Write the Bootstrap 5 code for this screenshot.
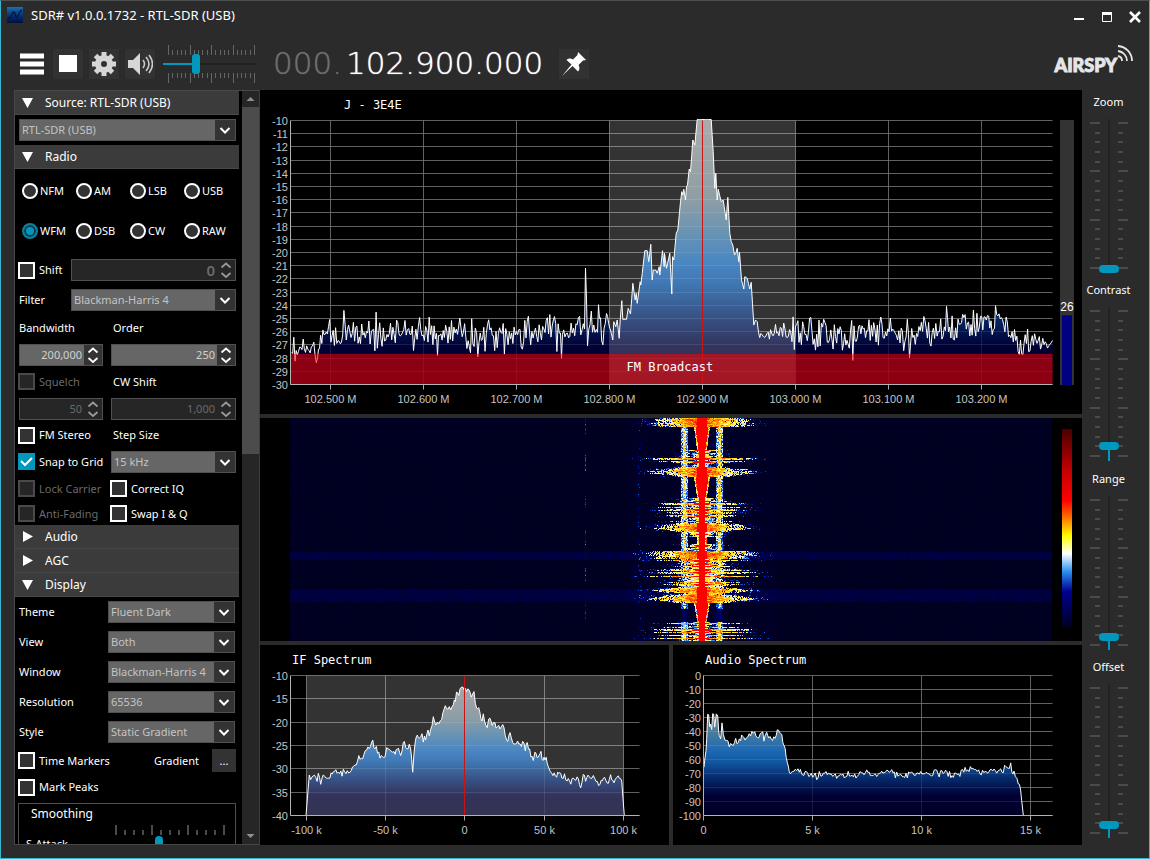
<!DOCTYPE html>
<html lang="en" data-bs-theme="dark">
<head>
<meta charset="utf-8">
<meta name="viewport" content="width=device-width, initial-scale=1">
<title>SDR# v1.0.0.1732 - RTL-SDR (USB)</title>
<link href="https://cdn.jsdelivr.net/npm/bootstrap@5.3.0/dist/css/bootstrap.min.css" rel="stylesheet">
<style>
:root{--chrome:#2b2b2b;--line:#484848;--accent:#0098bd}
body{background:var(--chrome);color:#fff;font-family:"Noto Sans","Open Sans",sans-serif;font-size:11px;line-height:16px}
.app-window{height:100vh;min-height:640px;border:1px solid #35b8cf;border-top-color:#4c4f4e}
.titlebar{height:28px;font-size:13px;padding:0 0 0 6px}
.win-btn{width:28px;height:28px;border:0;background:none;color:#fff;padding:0}
.toolbar{height:61px;padding:0 16px 0 16px}
.tool-btn{width:30px;height:30px;border:0;border-radius:0;background:#323232;padding:0;color:#fff}
.tool-btn.plain{background:none}
.freq{font-family:"DejaVu Sans",sans-serif;font-weight:200;font-size:31px;line-height:36px;text-shadow:0 0 1px currentColor}
.freq .dim{color:#6e6e6e}
.brand{font-family:Lato,sans-serif;font-weight:900;font-size:18px;line-height:24px;color:#e6e6e6;-webkit-text-stroke:1px #e6e6e6}
.main-area{padding:0 0 13px 13px}
/* sidebar */
.side{width:246px;background:#000;border:1px solid var(--line);border-right-color:#3c3c3c}
.side-scroll{overflow-y:auto;scrollbar-width:none}
.side-scroll::-webkit-scrollbar{display:none}
.side-bar{width:17px;background:#262626;color:#8a8a8a}
.side-thumb{height:347px;background:#4c4c4c}
.sec-head{width:224px;height:24px;border:0;border-bottom:1px solid var(--line);background:#3b3b3b;color:#fff;font-size:12px;padding:0 0 0 7px;gap:12px;text-align:left}
.sec-head svg{width:11px;height:11px}
.sec-body{width:224px;padding:0 3px 0 4px}
.row30{height:30px}.row27{height:27px}.row26{height:26px}.row23{height:23px}
.mode-list{padding:2px 0 4px 7px}
.mode-row{height:40px}
.mode-row label{width:54px;gap:2px}
.mode-row input{width:16px;height:16px;margin:0;appearance:none;border:2px solid #fff;border-radius:50%;background:#333}
.mode-row input:checked{border-color:#0f7e99;background:var(--accent);box-shadow:inset 0 0 0 2px #123a45}
.tick-box{gap:4px;margin-left:-1px}
.tick-box .form-check-input{width:17px;height:17px;margin:0;border:2px solid #fff;border-radius:0;background-color:#333;float:none}
.tick-box .form-check-input:checked{background-color:var(--accent);border-color:var(--accent);background-size:17px 17px;background-origin:border-box;
 background-image:url("data:image/svg+xml,%3Csvg xmlns='http://www.w3.org/2000/svg' viewBox='0 0 17 17'%3E%3Cpath d='M3 8l4 4 7-7' fill='none' stroke='%23fff' stroke-width='2'/%3E%3C/svg%3E")}
.tick-box .form-check-input:disabled{border-color:#4a4a4a;background-color:#262626;opacity:1}
.tick-box .form-check-input:disabled~span{color:#6a6a6a}
.pick{height:22px;padding:0 24px 0 2px;border:1px solid #505050;border-radius:0;font-size:11px;line-height:18px;color:#c4c4c4;background-color:#666;
 background-image:url("data:image/svg+xml,%3Csvg xmlns='http://www.w3.org/2000/svg' width='20' height='20'%3E%3Cpath d='M0 0h20v20H0z' fill='%23333'/%3E%3Cpath d='M5.500 8l4.500 4.500L14.500 8' fill='none' stroke='%23fff' stroke-width='2'/%3E%3C/svg%3E");background-size:20px 20px;background-position:right 0 center}
.col-a{width:92px}.col-b{width:125px}
.col-a+label:not(.tick-box){padding-left:2px}
.spin{height:22px;border:1px solid #505050;background:#666;color:#d0d0d0}
.spin input{min-width:0;width:100%;border:0;background:none;color:inherit;text-align:right;padding:0 2px 0 0;font-size:11px;outline:0}
.spin svg{width:18px;height:20px;flex:none;background:#333;color:#fff}
.spin.off{background:#262626;color:#6a6a6a}
.spin.off svg{background:none;color:#999}
.spin.big input{font-size:15px;font-weight:600}
.more-btn{width:24px;height:23px;border:0;border-radius:0;background:#333;color:#fff;padding:0;font-size:11px;line-height:20px}
.group{width:218px;margin:3px 0 0 3px;border:1px solid #505050;padding:2px 0 0 7px}
.group .gtitle{font-size:12px;padding:0 0 2px 5px}
/* sliders */
.slide{appearance:none;background:none;margin:0;height:20px}
.slide::-webkit-slider-runnable-track{height:2px;background:linear-gradient(to right,var(--accent) var(--v),#222 var(--v))}
.slide::-webkit-slider-thumb{appearance:none;width:8px;height:20px;margin-top:-9px;border-radius:4px;background:var(--accent);border:0}
.dials{width:67px;padding:2px 14px 0 0}
.dials label{font-size:11px;line-height:20px}
.dial{width:40px;height:154px;margin-top:7px;position:relative}
.dial .slide{position:absolute;width:154px;top:67px;left:-57px;transform:rotate(-90deg)}
.dial svg{width:40px;height:154px;display:block}
.vol{width:94px;height:40px;position:relative}
.vol .slide{position:absolute;left:0;top:9px;width:94px}
.vol .slide::-webkit-slider-thumb{border-radius:3px}
.ticks{stroke:#4b4b4b;stroke-width:2}
.ticks.fine{stroke:#666;stroke-width:1}
/* plots */
.plots{display:grid;gap:4px;grid-template-columns:409fr 409fr;grid-template-rows:324fr 223fr 200fr;min-width:0}
.plot{background:#000;min-width:0;min-height:0;overflow:hidden;position:relative}
.plot.span2{grid-column:1/3}
.plot>svg{position:absolute;inset:0;width:100%;height:100%}
.axis{font:11px "Liberation Sans",Arial,sans-serif;fill:#c4c4c4}
.cap{font:12px "DejaVu Sans Mono",monospace;fill:#fff}
.fall{display:grid;grid-template-columns:30px 1fr 30px}
.fall canvas{width:100%;height:100%;display:block;min-height:0;image-rendering:pixelated}
.fall-scale{width:10px;margin:11px 10px 14px 10px;background:linear-gradient(#4a0000,#c80000 22%,#f00 36%,#f60 44%,#ff0 54%,#fff 63%,#2a90f0 72%,#000090 82%,#000020)}
</style>
</head>
<body>
<div class="app-window d-flex flex-column overflow-hidden">
  <header class="titlebar d-flex align-items-center flex-shrink-0">
    <svg width="16" height="16" viewBox="0 0 16 16" class="me-2"><defs><linearGradient id="lg" x1="0" y1="0" x2="0" y2="1"><stop offset="0" stop-color="#1274b4"/><stop offset=".6" stop-color="#062a70"/><stop offset="1" stop-color="#02103c"/></linearGradient></defs><path d="M0 0h16v16H0z" fill="url(#lg)"/><path d="M1 11C5 13 5 4 7 5s1 7 3 5 2-6 5-7" fill="none" stroke="#04183c" stroke-width="1.500"/></svg>
    <span class="flex-grow-1">SDR# v1.0.0.1732 - RTL-SDR (USB)</span>
    <button class="win-btn" aria-label="Minimize"><svg width="12" height="12"><path d="M1 8h10" stroke="#fff" stroke-width="2"/></svg></button>
    <button class="win-btn" aria-label="Maximize"><svg width="12" height="12"><path d="M1.500 2v8.500h9V2" fill="none" stroke="#fff"/><path d="M1 2.500h10" stroke="#fff" stroke-width="3"/></svg></button>
    <button class="win-btn" aria-label="Close"><svg width="12" height="12"><path d="M1 1l10 10M11 1L1 11" stroke="#fff" stroke-width="2.600"/></svg></button>
  </header>

  <div class="toolbar d-flex align-items-start flex-shrink-0">
    <div class="d-flex pt-1 mt-3 flex-shrink-0" style="gap:6px">
      <button class="tool-btn plain" aria-label="Menu"><svg width="24" height="22" viewBox="0 0 24 22"><path d="M0 3h24M0 11h24M0 19h24" stroke="#fff" stroke-width="5"/></svg></button>
      <button class="tool-btn" aria-label="Stop"><svg width="18" height="18"><path d="M0 0h18v17H0z" fill="#fff"/></svg></button>
      <button class="tool-btn" aria-label="Settings"><svg width="24" height="24" viewBox="-12 -12 24 24" fill="#d6d6d6"><g id="gear"></g><path fill-rule="evenodd" d="M-9 0a9 9 0 1 0 18 0a9 9 0 1 0-18 0M-3 0a3 3 0 1 0 6 0a3 3 0 1 0-6 0"/></svg></button>
      <button class="tool-btn" aria-label="Mute"><svg width="26" height="24" viewBox="0 0 26 24"><path d="M1 8h5l7-7v22l-7-7H1z" fill="#d6d6d6"/><path d="M16 8q3 4 0 8M19 5q6 7 0 14M22 3q7 9 0 18" fill="none" stroke="#c8c8c8" stroke-width="1.600"/></svg></button>
    </div>
    <div class="vol ms-2 mt-3"><svg width="94" height="40" class="position-absolute top-0" id="volTicks"></svg><input class="slide" type="range" aria-label="Volume" value="34" style="--v:34%"></div>
    <div class="freq ms-3 mt-3 d-flex" aria-label="Frequency"><span class="dim me-1">000.</span><span>102.900.000</span></div>
    <div class="pt-1 mt-3 ms-3"><button class="tool-btn" aria-label="Pin"><svg width="26" height="26" viewBox="0 0 26 26"><path d="M17 1l8 8-3 .500-4.500 4.500c1.500 2.500 1 5-.500 6.500L11.500 15 1 25l9.500-11.500L5.500 9c1.500-1.500 4-2 6.500-.500L16.500 4z" fill="#fff"/></svg></button></div>
    <div class="brand ms-auto mt-3 d-flex align-items-start"><span class="pt-2">AIRSPY</span><svg width="16" height="18" viewBox="0 0 16 18" stroke="#e6e6e6" fill="none" stroke-width="1.800"><path d="M1 1a15 15 0 0 1 14 15M1 6a10 10 0 0 1 9 10M1 11a5 5 0 0 1 4 5"/></svg></div>
  </div>

  <main class="main-area d-flex flex-grow-1 overflow-hidden">
    <aside class="side d-flex justify-content-between flex-shrink-0">
      <div class="side-scroll">
        <button class="sec-head d-flex align-items-center" data-open="1">Source: RTL-SDR (USB)</button>
        <div class="sec-body d-flex align-items-center row30"><select class="form-select pick" aria-label="Source"><option>RTL-SDR (USB)</option></select></div>
        <button class="sec-head d-flex align-items-center" data-open="1">Radio</button>
        <div class="mode-list" id="modes"></div>
        <div class="sec-body">
          <div class="row30 d-flex align-items-center"><label class="tick-box d-flex align-items-center flex-shrink-0" style="width:53px"><input type="checkbox" class="form-check-input"><span>Shift</span></label><div class="spin big off d-flex flex-grow-1"><input type="text" value="0" aria-label="Shift" disabled></div></div>
          <div class="row30 d-flex align-items-center"><label for="filter" style="width:52px">Filter</label><select id="filter" class="form-select pick flex-grow-1 w-auto"><option>Blackman-Harris 4</option></select></div>
          <div class="row26 d-flex align-items-center"><label for="bw" class="col-a">Bandwidth</label><label for="ord">Order</label></div>
          <div class="row27 d-flex align-items-center"><div class="spin d-flex me-2" style="width:84px"><input id="bw" value="200,000"></div><div class="spin d-flex col-b"><input id="ord" value="250"></div></div>
          <div class="row27 d-flex align-items-center"><div class="col-a"><label class="tick-box d-flex align-items-center"><input type="checkbox" class="form-check-input" disabled><span>Squelch</span></label></div><label for="cw">CW Shift</label></div>
          <div class="row27 d-flex align-items-center"><div class="spin off d-flex me-2" style="width:84px"><input value="50" aria-label="Squelch level" disabled></div><div class="spin off d-flex col-b"><input id="cw" value="1,000" disabled></div></div>
          <div class="row26 d-flex align-items-center"><div class="col-a"><label class="tick-box d-flex align-items-center"><input type="checkbox" class="form-check-input"><span>FM Stereo</span></label></div><label for="step">Step Size</label></div>
          <div class="row27 d-flex align-items-center"><div class="col-a"><label class="tick-box d-flex align-items-center text-nowrap"><input type="checkbox" class="form-check-input" checked><span>Snap to Grid</span></label></div><select id="step" class="form-select pick col-b"><option>15 kHz</option></select></div>
          <div class="row27 d-flex align-items-center"><div class="col-a"><label class="tick-box d-flex align-items-center text-nowrap"><input type="checkbox" class="form-check-input" disabled><span>Lock Carrier</span></label></div><label class="tick-box d-flex align-items-center"><input type="checkbox" class="form-check-input"><span>Correct IQ</span></label></div>
          <div class="row23 d-flex align-items-center"><div class="col-a"><label class="tick-box d-flex align-items-center text-nowrap"><input type="checkbox" class="form-check-input" disabled><span>Anti-Fading</span></label></div><label class="tick-box d-flex align-items-center"><input type="checkbox" class="form-check-input"><span>Swap I &amp; Q</span></label></div>
        </div>
        <button class="sec-head d-flex align-items-center">Audio</button>
        <button class="sec-head d-flex align-items-center">AGC</button>
        <button class="sec-head d-flex align-items-center" data-open="1">Display</button>
        <div class="sec-body" id="display"></div>
        <div class="sec-body">
          <div class="d-flex align-items-center justify-content-between row27"><label class="tick-box d-flex align-items-center"><input type="checkbox" class="form-check-input"><span>Time Markers</span></label><div class="d-flex align-items-center" style="gap:13px"><span>Gradient</span><button class="more-btn" aria-label="Edit gradient">...</button></div></div>
          <div class="row26 d-flex align-items-center"><label class="tick-box d-flex align-items-center"><input type="checkbox" class="form-check-input"><span>Mark Peaks</span></label></div>
        </div>
        <div class="group"><div class="gtitle">Smoothing</div>
          <div class="d-flex justify-content-between"><label for="satt" class="pt-2 mt-1">S-Attack</label><div><svg width="124" height="12" class="d-block" id="attTicks"></svg><input id="satt" class="slide d-block" type="range" value="38" style="--v:38%;width:124px"></div></div>
        </div>
      </div>
      <div class="side-bar d-flex flex-column">
        <svg width="17" height="16" class="flex-shrink-0"><path d="M4.500 10h8l-4-4z" fill="#909090"/></svg>
        <div class="side-thumb"></div>
        <svg width="17" height="16" class="mt-auto flex-shrink-0"><path d="M4.500 6h8l-4 4z" fill="#909090"/></svg>
      </div>
    </aside>

    <section class="plots flex-grow-1">
      <div class="plot span2" id="rf"></div>
      <div class="plot span2 fall"><span></span><canvas id="fall" width="762" height="223"></canvas><div class="fall-scale"></div></div>
      <div class="plot" id="ifs"></div>
      <div class="plot" id="aud"></div>
    </section>

    <aside class="dials d-flex flex-column flex-shrink-0" id="dials"></aside>
  </main>
</div>
<script src="https://cdn.jsdelivr.net/npm/bootstrap@5.3.0/dist/js/bootstrap.bundle.min.js"></script>
<script>
const $=s=>document.querySelector(s), $$=s=>[...document.querySelectorAll(s)];
function rng(seed){return()=>{seed=(seed*1664525+1013904223)>>>0;return seed/4294967296}}

/* sidebar pieces */
$('#gear').innerHTML=[...Array(8)].map((_,i)=>`<path d="M-2.500 -12h5v6h-5z" transform="rotate(${i*45})"/>`).join('');
$$('.sec-head').forEach(h=>h.insertAdjacentHTML('afterbegin',h.dataset.open?'<svg viewBox="0 0 11 11"><path d="M0 1h11L5.500 11z" fill="#fff"/></svg>':'<svg viewBox="0 0 11 11"><path d="M1 0v11l10-5.500z" fill="#fff"/></svg>'));
$('#modes').innerHTML=[['NFM','AM','LSB','USB'],['WFM','DSB','CW','RAW']].map(r=>'<div class="mode-row d-flex align-items-center">'+r.map(m=>`<label class="d-flex align-items-center"><input type="radio" name="mode"${m=='WFM'?' checked':''}>${m}</label>`).join('')+'</div>').join('');
$$('.spin').forEach(s=>s.insertAdjacentHTML('beforeend','<svg viewBox="0 0 18 20"><path d="M4.500 7.500L9 3.500l4.500 4M4.500 13L9 17l4.500-4" fill="none" stroke="currentColor" stroke-width="1.700"/></svg>'));
$('#display').innerHTML=[['Theme','Fluent Dark'],['View','Both'],['Window','Blackman-Harris 4'],['Resolution','65536'],['Style','Static Gradient']].map(([l,v])=>`<div class="row30 d-flex align-items-center"><label for="d${l}" style="width:89px">${l}</label><select id="d${l}" class="form-select pick" style="width:127px"><option>${v}</option></select></div>`).join('');

/* slider scales */
$('#dials').innerHTML=[['Zoom',0],['Contrast',7.5],['Range',6.5],['Offset',6.5]].map(([n,v])=>{
  let t='';for(let i=0;i<16;i++){const y=Math.round(4+i*145/15),l=i%5?5:10;t+=`M${11-l} ${y}h${l}M29 ${y}h${l}`}
  return `<div class="flex-fill d-flex flex-column align-items-center" style="flex-basis:0"><label for="s${n}">${n}</label><div class="dial"><svg><path class="ticks" d="${t}"/></svg><input class="slide" id="s${n}" type="range" step="any" value="${v}" style="--v:${v+2}%"></div></div>`}).join('');
{let t='';for(let i=0;i<21;i++){const x=Math.round(5+i*4.3)+.5,l=i%5?5:10;t+=`M${x} ${10-l}v${l}M${x} 28v${l}`}
$('#volTicks').innerHTML=`<path class="ticks fine" d="${t}"/>`;
t='';for(let i=0;i<13;i++){const x=5+i*9,l=i%4?5:10;t+=`M${x} ${11-l}v${l}`}
$('#attTicks').innerHTML=`<path class="ticks" d="${t}"/>`}

/* traces: control points in plot units, with seeded grain added between them */
function trace(pts,step,amp,seed){
  const r=rng(seed),o=[];
  for(let i=0;i<pts.length-1;i++){
    const [x0,y0,a=amp]=pts[i],[x1,y1]=pts[i+1],n=Math.max(1,Math.round((x1-x0)/step));
    for(let k=0;k<n;k++){const t=k/n;o.push([x0+(x1-x0)*t,y0+(y1-y0)*t+(r()+r()+r()-1.500)*a])}
  }
  o.push(pts.at(-1));return o;
}
const pair=(s,ox,oy,a)=>s.split(' ').map(p=>{const [x,y]=p.split(',').map(Number);return[x/3+ox,y/3+oy,a]});
const N=18;
const rfPts=[[1,229,12],[22,228,10],[27,238,2],[29,218,N],[38,211,N],[70,215,N],[100,211,N],[146,214,2],[147,234,2],[148,214,N],[180,215,N],[220,215,N],[270,212,2],[271,238,2],[272,212,N],[294,208,1],[295,148,1],[297,209,N],[307,211,1],[308,184,1],[310,211,N],[316,190,3]]
 .concat(pair('58,715 60,720 67,750 70,695 76,710 80,690 86,745 89,690 94,632 97,688 108,688 113,655 120,672 127,580 134,630 137,610 140,640 149,575 151,585 163,482 170,482 175,515 181,463 185,570 188,540 196,540 200,550 206,530 208,555 216,482 221,530 222,490 228,535 238,490 244,612 246,500 250,510 257,430 262,420 270,335 274,305 277,315 280,298 285,330 288,290 291,285 296,237 300,245 307,150 313,165 320,88 362,88 368,185 373,295 376,250 380,330 383,298 392,335 398,330 407,390 412,322 418,430 422,455 427,465 432,495 436,490 440,475 445,515 447,487 453,570 460,597 463,560 470,565 478,597 482,577 490,705 495,690 500,695',300,-30.5,0))
 .concat([[468,213,7],[485,213,14],[505,214,N],[525,208,N],[545,217,N],[560,221,N],[575,210,N],[595,212,N],[618,215,2],[619,238,2],[620,213,N],[655,210,2],[656,186,3],[658,208,N],[690,206,N],[704,202,6],[705,188,6],[712,206,N],[724,212,12],[730,226,14],[750,218,14],[757,228,4],[762,220,0]]);
const ifPts=pair('138,555 148,430 152,440 175,435 182,460 190,430 195,442 210,440 220,422 250,425 270,418 285,405 300,380 320,360 335,335 345,345 360,370 375,375 380,350 395,360 402,372 412,348 422,368 430,335 440,362 452,345 458,408 466,335 472,308 478,320 482,325 486,308 490,330 500,310 512,300 520,265 528,288 545,262 556,225 564,238 580,225 586,198 600,180 606,160 612,178 628,175 634,200 642,188 650,235 656,230 666,268 670,250 677,288 686,268 700,280 705,272 708,295 720,290 732,288 740,325 750,300 758,335 780,345 792,330 796,362 802,342 820,385 825,365 835,380 840,358 846,388 852,378 862,395 875,435 890,442 896,425 902,440 925,445 955,445 962,475 970,430 980,445 1000,440 1020,455 1030,442 1045,455 1055,432 1062,455 1075,435 1085,450 1093,555',-30.5,-44.5,4);
const auPts=pair('102,415 104,385 108,370 110,330 113,255 116,252 119,285 122,280 125,292 128,255 131,255 134,290 139,250 143,255 146,310 148,330 152,330 156,285 160,320 165,330 178,345 190,345 197,325 205,338 215,320 225,332 250,308 262,325 275,308 285,328 290,315 300,325 315,325 322,302 332,308 342,345 352,400 358,430 368,420 388,418 398,435 420,435 440,440 460,430 500,432 550,438 590,428 620,435 665,422 680,432 740,430 800,428 850,435 905,415 930,430 960,425 1000,420 1022,412 1032,430 1045,455 1055,510 1060,555',-33.5,-45.5,4);
ifPts[0][2]=ifPts[ifPts.length-2][2]=0;

const charts=[
 {el:'#rf',w:762,h:264,top:30,pts:trace(rfPts,1.2,0,7),y:[...Array(21)].map((_,i)=>-10-i),
  x:[...Array(8)].map((_,i)=>[40+93*i,(102.5+i/10).toFixed(3)+' M']),shade:[319,505],cur:412,title:'J - 3E4E',tx:84,ty:19,band:1,meter:1},
 {el:'#ifs',w:349,h:140,top:30,pts:trace(ifPts,1.3,3,3),y:[-10,-15,-20,-25,-30,-35,-40],
  x:[[16,'-100 k'],[95,'-50 k'],[174,'0'],[254,'50 k'],[333,'100 k']],shade:[16,333],cur:174,title:'IF Spectrum',tx:32,ty:19},
 {el:'#aud',w:349,h:140,top:30,pts:trace(auPts,1.3,2.5,5),y:[0,-10,-20,-30,-40,-50,-60,-70,-80,-90,-100],
  x:[[0,'0'],[109,'5 k'],[218,'10 k'],[327,'15 k']],title:'Audio Spectrum',tx:32,ty:19}];

function draw(c){
  const el=$(c.el),W=el.clientWidth,H=el.clientHeight,L=30.5,T=c.top+.5,pw=W-60,ph=H-60,sx=pw/c.w,sy=ph/c.h;
  const X=v=>Math.round(v*sx)+L, id='g'+c.el.slice(1);
  let s=`<svg><defs><linearGradient id="${id}" gradientUnits="userSpaceOnUse" x1="0" x2="0" y1="${T}" y2="${T+ph}"><stop offset="0" stop-color="#969696"/><stop offset=".3" stop-color="#72868f"/><stop offset=".42" stop-color="#457aa0"/><stop offset=".54" stop-color="#1c68b4"/><stop offset=".62" stop-color="#1056a0"/><stop offset=".74" stop-color="#062868"/><stop offset=".86" stop-color="#000033"/><stop offset="1" stop-color="#000026"/></linearGradient></defs>`;
  let grid='';
  c.y.forEach((v,i)=>{const y=Math.round(i*ph/(c.y.length-1))+T;grid+=`M${L} ${y}h${pw}`;s+=`<text class="axis" text-anchor="end" x="28" y="${y+4}">${v}</text>`});
  c.x.forEach(([v,t])=>{grid+=`M${X(v)} ${T}v${ph}`;s+=`<path d="M${X(v)} ${T+ph}v5" stroke="#aaa"/><text class="axis" text-anchor="middle" x="${X(v)}" y="${T+ph+18}">${t}</text>`});
  s+=`<path d="${grid}" stroke="#505050" fill="none"/>`;
  const p=c.pts.map(([x,y])=>`${(x*sx+L).toFixed(1)},${(Math.max(-1,Math.min(c.h,y))*sy+T).toFixed(1)}`);
  const a=(c.pts[0][0]*sx+L).toFixed(1),b=(c.pts.at(-1)[0]*sx+L).toFixed(1);
  s+=`<polygon points="${a},${T+ph} ${p.join(' ')} ${b},${T+ph}" fill="url(#${id})"/><path d="${grid}" stroke="#fff" opacity=".1" fill="none"/><polyline points="${p.join(' ')}" fill="none" stroke="#fff" stroke-linejoin="round"/>`;
  if(c.shade)s+=`<rect x="${X(c.shade[0])}" y="${T}" width="${X(c.shade[1])-X(c.shade[0])}" height="${ph}" fill="#fff" fill-opacity=".2"/>`;
  if(c.band)s+=`<rect x="${L}" y="${T+ph*.884}" width="${pw}" height="${ph*.116}" fill="#f00" fill-opacity=".55"/>`;
  if(c.cur)s+=`<path d="M${X(c.cur)} ${T}v${ph}" stroke="#c81414"/>`;
  s+=`<path d="M${L} ${T}v${ph}h${pw}" fill="none" stroke="#b4b4b4"/><text class="cap" x="${c.tx}" y="${c.ty}">${c.title}</text>`;
  if(c.band)s+=`<text class="cap" x="${X(c.cur)-76}" y="${T+ph-14}">FM Broadcast</text>`;
  if(c.meter)s+=`<rect x="${W-22}" y="30" width="14" height="${ph+1}" fill="#333"/><rect x="${W-20}" y="${30+ph*.74}" width="10" height="${ph*.26+1}" fill="#000080"/><text class="axis" style="font-size:12px;fill:#fff" text-anchor="middle" x="${W-15}" y="${26+ph*.74}">26</text>`;
  el.innerHTML=s+'</svg>';
}
const drawAll=()=>charts.forEach(draw);
drawAll();addEventListener('resize',drawAll);

/* waterfall */
(function(){
  const cv=$('#fall'),g=cv.getContext('2d'),im=g.createImageData(762,223),r=rng(42);
  const map=[[0,0,0,28],[.2,0,0,130],[.35,30,120,235],[.45,255,255,255],[.56,255,250,60],[.72,255,170,0],[.86,255,70,0],[1,255,0,0]];
  const col=v=>{v=Math.max(0,Math.min(1,v));let i=1;while(map[i][0]<v)i++;const a=map[i-1],b=map[i],t=(v-a[0])/(b[0]-a[0]);return[1,2,3].map(k=>a[k]+(b[k]-a[k])*t)};
  /* rows from, to, kind (b burst, l lines, q quiet), half width */
  const seg=[[0,8,'b',56],[9,31,'q'],[32,36,'l',25],[37,48,'l',56],[49,58,'b',54],[59,79,'q'],[80,84,'l',25],[85,104,'l',54],[105,113,'b',52],[114,118,'l',22],[119,125,'q'],[126,132,'l',25],[133,140,'b',56],[141,152,'l',46],[153,168,'l',54],[169,175,'b',50],[176,184,'b',56],[185,203,'q'],[204,222,'l',56]];
  for(let y=0;y<223;y++){
    const s=seg.find(q=>y<=q[1]),t=(y-s[0])/(s[1]-s[0]||1);
    let w=0,core=4,str=1,thin=false;
    if(s[2]=='q'){core=s[1]-s[0]>10?6.5-3*t:3.5}
    else if(s[2]=='b'){w=s[3]*(.5+.5*Math.sin(Math.PI*t))*(.85+r()*.2);core=5;if(s[0]==133||s[0]==0)w=s[3]*(.75+r()*.25)}
    else{const dense=s[0]>=141&&s[0]<=168;thin=y%3==0||r()<.25;w=thin?(dense?16:7)+r()*10:s[3]*(.5+r()*.55);core=thin?3.5:5+r()*5;str=thin?.75:.85+r()*.15}
    const bright=(y>=134&&y<=141)||(y>=171&&y<=183);
    let n=r(),run=0;
    for(let x=0;x<762;x++){
      if(run--<=0){n=r();run=Math.floor(r()*4)}
      const dx=x-411.5,ad=Math.abs(dx);let v=.004+r()*.012;
      if(bright)v+=.035+r()*.05;
      if(Math.abs(x-349)<2&&r()<.13)v+=r()*.3;
      if(x==295)v+=(y%37<16?.35:.05)*r();
      if(ad<75)v+=r()*.02;
      if(w&&ad<w){const e=ad/w;v=str*(.88-e*.46)+(n-.5)*.26+(r()-.5)*.16;if(e>.45&&r()<(e-.4)*.8)v*=.25}
      else if(w&&ad<w+14&&r()<.3)v+=r()*.3;
      const pc=Math.min(Math.abs(dx+17.500),Math.abs(dx-17.500));
      if(pc<3.2&&(!w||w<20)){const q=s[0]==185?(t>.3?.12:.4):.52;v=Math.max(v,q*(.6+r()*.7)*(pc<1.6?1.1:.75))}
      else if(ad<17&&s[2]=='q'&&r()<.3)v+=r()*.14;
      if(ad<core)v=1;else if(ad<core+1.500&&s[2]=='q')v=.4+r()*.5;
      const c=col(v),o=(y*762+x)*4;im.data[o]=c[0];im.data[o+1]=c[1];im.data[o+2]=c[2];im.data[o+3]=255;
    }
  }
  g.putImageData(im,0,0);
})();
</script>
</body>
</html>
